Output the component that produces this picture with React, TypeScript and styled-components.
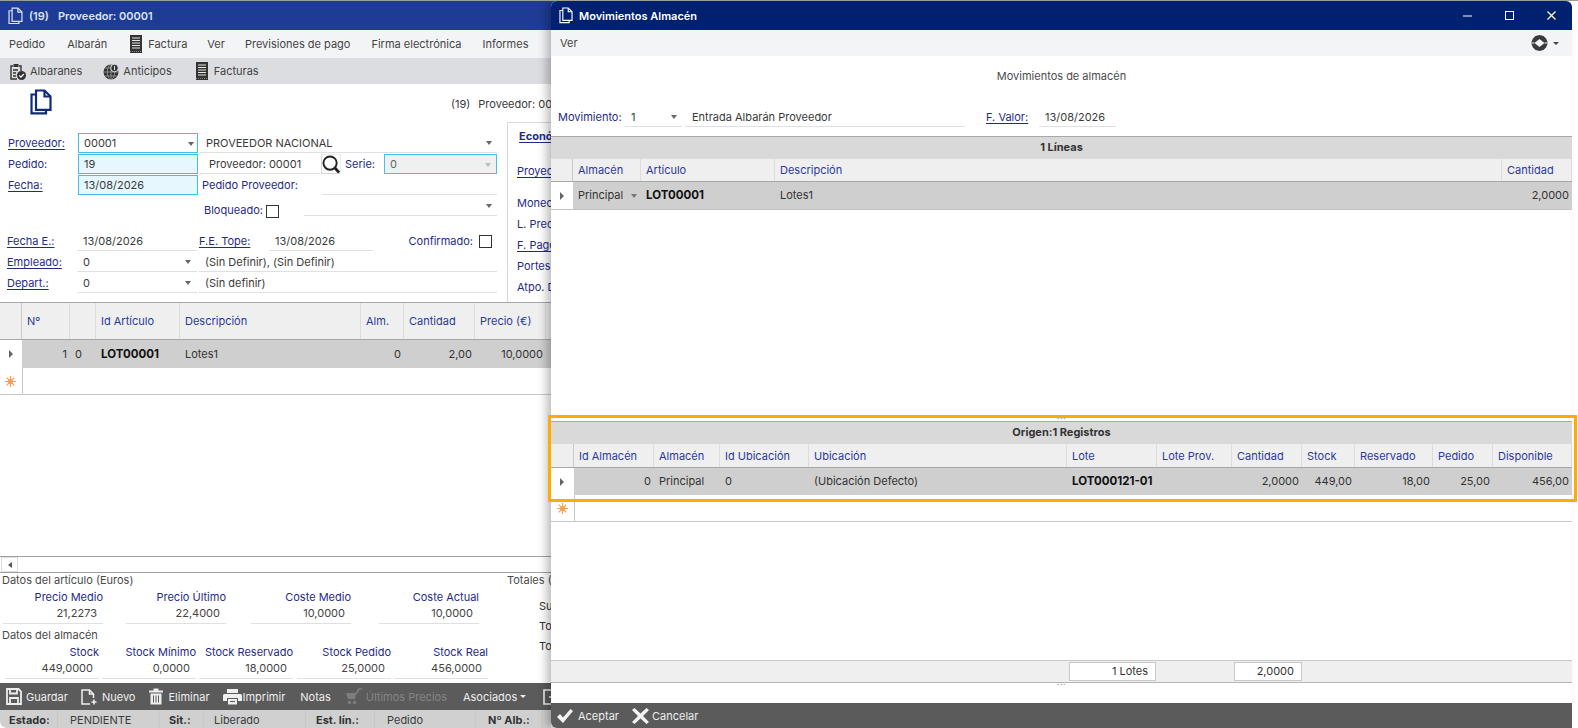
import React from "react";
import styled, { createGlobalStyle } from "styled-components";

const GlobalStyle = createGlobalStyle`
  html, body { margin: 0; padding: 0; background: #fff; }
  body {
    font-family: Inter, "Liberation Sans", sans-serif;
    font-size: 11px;
    color: #3a3a3a;
  }
  * { box-sizing: border-box; }
`;

const NAVY = "#1f2c86";
const HEAD = "#2b3a9c";
const LINE = "#dfe0e6";
const CYAN = "#43bff0";

const Desktop = styled.div`
  position: relative;
  width: 1578px;
  height: 728px;
  overflow: hidden;
  background: #fff;
  border-top: 1px solid #9c9c9c;
`;

const BackWindow = styled.div`
  position: absolute;
  left: 0;
  top: 0;
  width: 640px;
  height: 727px;
  display: flex;
  flex-direction: column;
  background: #fff;
  overflow: hidden;
  border-bottom-left-radius: 7px;
`;

const TitleBar = styled.div<{ $bg: string }>`
  height: 29px;
  flex: none;
  display: flex;
  align-items: center;
  background: ${(p) => p.$bg};
  color: #fff;
  padding-left: 8px;
`;

const TitleText = styled.span<{ $ml: number; $dim?: boolean }>`
  margin-left: ${(p) => p.$ml}px;
  font-weight: 600;
  color: ${(p) => (p.$dim ? "#dbe1f2" : "#fff")};
  white-space: nowrap;
`;

const WinControls = styled.div`
  margin-left: auto;
  display: flex;
  align-items: center;
`;

const WinButton = styled.div`
  width: 42px;
  height: 29px;
  display: flex;
  align-items: center;
  justify-content: center;
`;

const MenuBar = styled.div<{ $h: number }>`
  height: ${(p) => p.$h}px;
  flex: none;
  display: flex;
  align-items: center;
  background: #f3f4f6;
  padding-left: 9px;
  color: #444;
  white-space: nowrap;
`;

const MenuItem = styled.span<{ $ml?: number }>`
  display: inline-flex;
  align-items: center;
  gap: 6px;
  margin-left: ${(p) => p.$ml ?? 0}px;
`;

const MenuRight = styled.div`
  margin-left: auto;
  padding-right: 13px;
  display: flex;
  align-items: center;
  gap: 5px;
`;

const ToolStrip = styled.div`
  height: 26px;
  flex: none;
  display: flex;
  align-items: center;
  background: #dcdde1;
  padding-left: 10px;
  color: #444;
`;

const ToolItem = styled.span<{ $ml?: number; $gap: number }>`
  display: inline-flex;
  align-items: center;
  gap: ${(p) => p.$gap}px;
  margin-left: ${(p) => p.$ml ?? 0}px;
`;

const DocHeader = styled.div`
  height: 38px;
  flex: none;
  display: flex;
  padding: 5px 0 0 30px;
`;

const DocCaption = styled.div`
  margin-left: 399px;
  padding-top: 8px;
  display: flex;
  gap: 8px;
  white-space: nowrap;
`;

const FormArea = styled.div`
  height: 180px;
  flex: none;
  display: flex;
`;

const FormColumn = styled.div`
  width: 507px;
  flex: none;
  padding-top: 11px;
`;

const SidePanel = styled.div`
  flex: 1;
  border-top: 1px solid #d8d8d8;
  border-left: 1px solid #d8d8d8;
  padding-top: 6px;
`;

const SideTab = styled.div`
  margin-left: 11px;
  font-weight: 700;
  color: ${NAVY};
  text-decoration: underline;
  text-underline-offset: 2px;
  height: 18px;
`;

const SideRow = styled.div<{ $mt?: number; $link?: boolean }>`
  margin: ${(p) => p.$mt ?? 0}px 0 0 9px;
  height: 21px;
  line-height: 21px;
  color: ${NAVY};
  white-space: nowrap;
  text-decoration: ${(p) => (p.$link ? "underline" : "none")};
  text-underline-offset: 2px;
`;

const FormRow = styled.div<{ $h?: number; $mt?: number }>`
  display: flex;
  height: ${(p) => p.$h ?? 21}px;
  margin-top: ${(p) => p.$mt ?? 0}px;
  align-items: flex-start;
`;

const Label = styled.div<{ $w: number; $pl?: number; $pt?: number; $right?: boolean }>`
  width: ${(p) => p.$w}px;
  flex: none;
  padding-left: ${(p) => p.$pl ?? 0}px;
  padding-top: ${(p) => p.$pt ?? 0}px;
  height: 20px;
  line-height: 21px;
  color: ${NAVY};
  white-space: nowrap;
  text-align: ${(p) => (p.$right ? "right" : "left")};
`;

const LinkText = styled.span`
  text-decoration: underline;
  text-underline-offset: 2px;
`;

const BoxField = styled.div<{ $w: number; $bg?: string; $mut?: boolean }>`
  position: relative;
  width: ${(p) => p.$w}px;
  flex: none;
  height: 20px;
  line-height: 19px;
  padding-left: 5px;
  border: 1px solid ${CYAN};
  background: ${(p) => p.$bg ?? "#fff"};
  color: ${(p) => (p.$mut ? "#666" : "#3a3a3a")};
`;

const LineField = styled.div<{ $w: number; $ml?: number; $pl?: number }>`
  position: relative;
  width: ${(p) => p.$w}px;
  flex: none;
  margin-left: ${(p) => p.$ml ?? 0}px;
  height: 20px;
  line-height: 21px;
  padding-left: ${(p) => p.$pl ?? 6}px;
  border-bottom: 1px solid ${LINE};
  white-space: nowrap;
`;

const Caret = styled.i<{ $r?: number; $c?: string }>`
  position: absolute;
  right: ${(p) => p.$r ?? 5}px;
  top: 8px;
  width: 0;
  height: 0;
  border-left: 3.5px solid transparent;
  border-right: 3.5px solid transparent;
  border-top: 4px solid ${(p) => p.$c ?? "#666"};
`;

const RowCaret = styled(Caret)`
  top: 12px;
`;

const InlineCaret = styled.i<{ $c: string }>`
  display: inline-block;
  width: 0;
  height: 0;
  border-left: 3px solid transparent;
  border-right: 3px solid transparent;
  border-top: 3px solid ${(p) => p.$c};
`;

const Check = styled.div<{ $ml: number; $mt: number }>`
  width: 13px;
  height: 13px;
  flex: none;
  margin: ${(p) => p.$mt}px 0 0 ${(p) => p.$ml}px;
  border: 1px solid #333;
  background: #fff;
`;

const SearchButton = styled.div`
  width: 20px;
  height: 20px;
  flex: none;
  margin-left: 1px;
  border: 1px solid #d8d8d8;
  border-right-color: #eee;
  border-top-color: #eee;
  display: flex;
  align-items: center;
  justify-content: center;
`;

const TableRow = styled.div<{ $cols: string; $h: number; $bb?: string }>`
  display: grid;
  grid-template-columns: ${(p) => p.$cols};
  height: ${(p) => p.$h}px;
  border-bottom: ${(p) => (p.$bb ? `1px solid ${p.$bb}` : "none")};
  flex: none;
`;

const HeadCell = styled.div`
  background: #efefef;
  color: ${HEAD};
  padding-left: 5px;
  display: flex;
  align-items: center;
  border-right: 1px solid #dcdcdc;
  white-space: nowrap;
  overflow: hidden;
`;

const SelectorHead = styled(HeadCell)`
  border-right: 1px solid #c8c8c8;
`;

const DataCell = styled.div<{ $right?: boolean; $bold?: boolean }>`
  position: relative;
  background: #cfcfcf;
  color: ${(p) => (p.$bold ? "#111" : "#333")};
  font-size: ${(p) => (p.$bold ? 11.5 : 11)}px;
  font-weight: ${(p) => (p.$bold ? 700 : 400)};
  display: flex;
  align-items: center;
  justify-content: ${(p) => (p.$right ? "flex-end" : "flex-start")};
  padding: 0 3px 1px 5px;
  white-space: nowrap;
  overflow: hidden;
`;

const SelectorCell = styled.div`
  display: flex;
  align-items: center;
  justify-content: center;
  background: #fff;
  padding-right: 1px;
`;

const RowArrow = styled.i`
  width: 0;
  height: 0;
  border-top: 4px solid transparent;
  border-bottom: 4px solid transparent;
  border-left: 4px solid #666;
`;

const NewRowFill = styled.div`
  background: #fff;
  border-left: 1px solid #c8c8c8;
`;

const BackGrid = styled.div`
  border-top: 1px solid #a8a8a8;
  flex: none;
  height: 254px;
`;

const HScroll = styled.div`
  height: 17px;
  flex: none;
  display: flex;
  border-top: 1px solid #a0a0a0;
  border-bottom: 1px solid #a0a0a0;
`;

const ScrollArrow = styled.div`
  width: 17px;
  margin-left: 1px;
  border: 1px solid #ddd;
  display: flex;
  align-items: center;
  justify-content: center;
  &::before {
    content: "";
    border-top: 3px solid transparent;
    border-bottom: 3px solid transparent;
    border-right: 4px solid #555;
  }
`;

const DataSection = styled.div`
  flex: 1;
  display: flex;
`;

const DataLeft = styled.div`
  width: 505px;
  flex: none;
`;

const DataRight = styled.div`
  flex: 1;
  color: #444;
`;

const Caption = styled.div<{ $h: number; $pt?: number }>`
  height: ${(p) => p.$h}px;
  padding: ${(p) => p.$pt ?? 0}px 0 0 2px;
  line-height: 15px;
  color: #4a4a4a;
  white-space: nowrap;
`;

const TotalsLine = styled.div<{ $mt: number }>`
  margin: ${(p) => p.$mt}px 0 0 34px;
  height: 14px;
  line-height: 14px;
  white-space: nowrap;
  color: #333;
`;

const StatRow = styled.div<{ $pl: number }>`
  display: flex;
  padding-left: ${(p) => p.$pl}px;
`;

const Stat = styled.div<{ $w: number; $ml: number }>`
  width: ${(p) => p.$w}px;
  margin-left: ${(p) => p.$ml}px;
  flex: none;
  text-align: right;
`;

const StatLabel = styled.div`
  height: 16px;
  line-height: 16px;
  color: ${NAVY};
  white-space: nowrap;
`;

const StatValue = styled.div`
  height: 19px;
  line-height: 17px;
  padding-right: 6px;
  border-bottom: 1px solid ${LINE};
  color: #444;
`;

const ActionBar = styled.div<{ $h: number }>`
  height: ${(p) => p.$h}px;
  flex: none;
  display: flex;
  align-items: center;
  background: #5b5b5b;
  color: #eee;
  padding-left: 6px;
  white-space: nowrap;
`;

const ActionItem = styled.span<{ $ml?: number; $gap?: number; $off?: boolean }>`
  display: inline-flex;
  align-items: center;
  gap: ${(p) => p.$gap ?? 4}px;
  margin-left: ${(p) => p.$ml ?? 0}px;
  color: ${(p) => (p.$off ? "#858585" : "#eee")};
`;

const StatusBar = styled.div`
  height: 18px;
  flex: none;
  display: flex;
  background: #d0d0d0;
`;

const StatusCell = styled.div<{ $w: number; $pl: number; $bold?: boolean }>`
  width: ${(p) => p.$w}px;
  flex: none;
  padding-left: ${(p) => p.$pl}px;
  line-height: 20px;
  font-weight: ${(p) => (p.$bold ? 700 : 400)};
  color: ${(p) => (p.$bold ? "#333" : "#3c3c3c")};
  border-right: 1px solid #c8c8c8;
  white-space: nowrap;
`;

const Modal = styled.div`
  position: absolute;
  left: 551px;
  top: 0;
  width: 1021px;
  height: 727px;
  display: flex;
  flex-direction: column;
  background: #fff;
  border-radius: 6px 6px 0 6px;
  overflow: hidden;
`;

const ModalShadow = styled.div`
  position: absolute;
  left: 551px;
  top: 0;
  width: 1021px;
  height: 727px;
  box-shadow: -5px 0 9px -1px rgba(0, 0, 0, 0.28);
`;

const ModalHeading = styled.div`
  height: 38px;
  flex: none;
  padding-top: 12px;
  text-align: center;
  line-height: 16px;
  color: #4c4c4c;
`;

const ModalForm = styled.div`
  display: flex;
  flex: none;
  height: 20px;
  margin: 13px 0 9px;
`;

const Pane = styled.div<{ $h: number }>`
  height: ${(p) => p.$h}px;
  flex: none;
  border-top: 1px solid #a8a8a8;
`;

const GroupBand = styled.div`
  height: 22px;
  background: #d9d9d9;
  text-align: center;
  line-height: 21px;
  font-weight: 700;
  color: #333;
`;

const Splitter = styled.div<{ $h: number }>`
  height: ${(p) => p.$h}px;
  flex: none;
  display: flex;
  justify-content: center;
  color: #888;
  font-size: 9px;
  line-height: 3px;
  letter-spacing: 0.5px;
`;

const TotalsBar = styled.div`
  height: 23px;
  flex: none;
  display: flex;
  align-items: center;
  padding-left: 518px;
  background: #efefef;
  border-top: 1px solid #c8c8c8;
  border-bottom: 1px solid #b4b4b4;
`;

const TotalBox = styled.div<{ $w: number; $ml?: number }>`
  width: ${(p) => p.$w}px;
  margin-left: ${(p) => p.$ml ?? 0}px;
  height: 19px;
  line-height: 17px;
  text-align: right;
  padding-right: 7px;
  background: #fff;
  border: 1px solid #c8c8c8;
  color: #333;
`;

const Highlight = styled.div`
  position: absolute;
  left: 548px;
  top: 414px;
  width: 1029px;
  height: 87px;
  border: 3px solid #ffab00;
  pointer-events: none;
`;

const DocsIcon = ({ size, color }: { size: number; color: string }) => (
  <svg width={size} height={size * 1.18} viewBox="0 0 22 26" fill="none" stroke={color} strokeWidth={size > 18 ? 2.2 : 1.8}>
    <path d="M6 1.5H14.5L20.5 7.5V21H6Z" />
    <path d="M14.5 1.5V7.5H20.5" />
    <path d="M6 5.5H1.5V24.5H16V21" />
  </svg>
);

const LedgerIcon = () => (
  <svg width="12" height="18" viewBox="0 0 12 18">
    <rect width="12" height="18" fill="#333" />
    <path d="M2 3H10M2 5.5H10M2 8H10M2 10.5H10M2 13H10" stroke="#e8e8e8" strokeWidth="1" />
    <path d="M0 16.5H12" stroke="#888" strokeDasharray="1 1" />
  </svg>
);

const ClipboardIcon = () => (
  <svg width="16" height="17" viewBox="0 0 16 17" fill="none">
    <path d="M3 3H1V16H7M9 3H11V8" stroke="#333" strokeWidth="1.4" />
    <rect x="3.5" y="1" width="5" height="3" fill="#333" />
    <path d="M3 7H8M3 10H6M3 13H6" stroke="#333" strokeWidth="1.3" />
    <circle cx="11.5" cy="12.5" r="4.5" fill="#333" />
    <path d="M9.3 12.5L11 14.2L13.8 11" stroke="#fff" strokeWidth="1.2" />
  </svg>
);

const GlobeIcon = () => (
  <svg width="16" height="17" viewBox="0 0 16 17" fill="none">
    <circle cx="8" cy="9" r="7.5" fill="#333" />
    <path d="M.5 9H15.5M2 5H14M2 13H14M8 1.5V16.5" stroke="#aaa" strokeWidth=".7" />
    <ellipse cx="8" cy="9" rx="3.6" ry="7.5" stroke="#aaa" strokeWidth=".7" />
    <circle cx="11.5" cy="5" r="3.8" fill="#333" stroke="#dcdde1" />
    <path d="M11.5 3V7" stroke="#dcdde1" />
  </svg>
);

const MagnifierIcon = () => (
  <svg width="19" height="19" viewBox="0 0 19 19" fill="none" stroke="#222">
    <circle cx="8.5" cy="8" r="7" strokeWidth="2" />
    <path d="M13.5 13L18 18" strokeWidth="3" />
  </svg>
);

const SaveIcon = () => (
  <svg width="16" height="17" viewBox="0 0 16 17" fill="none" stroke="#eee" strokeWidth="1.8">
    <path d="M1 1H12.5L15 3.5V16H1Z" />
    <path d="M4 1V5.5H11V1M4 16V10H12V16" />
  </svg>
);

const NewDocIcon = () => (
  <svg width="17" height="16" viewBox="0 0 17 16" fill="none" stroke="#eee" strokeWidth="1.5">
    <path d="M9 15H1V1H8.5L12.5 5V9" />
    <path d="M8.5 1V5H12.5" />
    <path d="M13 10.5V15.5M10.5 13H15.5" strokeWidth="1.6" />
  </svg>
);

const TrashIcon = () => (
  <svg width="14" height="17" viewBox="0 0 14 17">
    <path d="M0 2.5H14V4.5H0ZM4.5 .5H9.5V2.5H4.5Z" fill="#eee" />
    <path d="M1.5 5.5H12.5V16.5H1.5Z" fill="#eee" />
    <path d="M4.5 7.5V14.5M7 7.5V14.5M9.5 7.5V14.5" stroke="#5b5b5b" />
  </svg>
);

const PrinterIcon = () => (
  <svg width="19" height="16" viewBox="0 0 19 16">
    <path d="M4 0H15V4H4Z" fill="#eee" />
    <path d="M1.5 5H17.5Q19 5 19 6.5V12H15V9H4V12H0V6.5Q0 5 1.5 5Z" fill="#eee" />
    <path d="M5 10H14V15.5H5Z" fill="#eee" />
    <path d="M7 12.5H12" stroke="#5b5b5b" />
  </svg>
);

const CartIcon = () => (
  <svg width="16" height="17" viewBox="0 0 16 17">
    <path d="M0 5H10L9 11H2Z" fill="#7d7d7d" />
    <path d="M10 6L13 1H16" stroke="#7d7d7d" strokeWidth="1.6" fill="none" />
    <circle cx="3.5" cy="14.5" r="1.7" fill="#7d7d7d" />
    <circle cx="8.5" cy="14.5" r="1.7" fill="#7d7d7d" />
  </svg>
);

const FrameIcon = () => (
  <svg width="14" height="16" viewBox="0 0 14 16" fill="none" stroke="#eee" strokeWidth="1.6">
    <path d="M1 1H13V15H1Z" />
    <path d="M6 8H9" />
  </svg>
);

const SyncIcon = () => (
  <svg width="17" height="16" viewBox="0 0 17 16">
    <path d="M4.5 1L8.5 0L12.5 1L15 3.5L17 8L15 12.5L12.5 15L8.5 16L4.5 15L2 12.5L0 8L2 3.5Z" fill="#3a3a3a" />
    <path d="M8.5 4L13.5 8L8.5 12L3.5 8Z" fill="#f3f4f6" />
    <path d="M0 8H3.5M13.5 8H17" stroke="#f3f4f6" strokeWidth="1" />
  </svg>
);

const StarIcon = () => (
  <svg width="11" height="11" viewBox="0 0 11 11" stroke="#f7a14a" strokeWidth="1.2">
    <path d="M5.5 0V11M0 5.5H11M1.7 1.7L9.3 9.3M9.3 1.7L1.7 9.3" />
    <circle cx="5.5" cy="5.5" r="2.5" fill="#f7a14a" stroke="none" />
  </svg>
);

const CheckMarkIcon = () => (
  <svg width="16" height="14" viewBox="0 0 16 14">
    <path d="M0 8L3 5L6 8.5L13.5 0L16 2L6 14Z" fill="#f2f2f2" />
  </svg>
);

const CrossIcon = () => (
  <svg width="17" height="16" viewBox="0 0 17 16">
    <path d="M0 2L2.5 0L8.5 5.5L14.5 0L17 2L11 8L17 14L14.5 16L8.5 10.5L2.5 16L0 14L6 8Z" fill="#f2f2f2" />
  </svg>
);

const backCols = "22px 48px 26px 84px 181px 43px 71px 71px 1fr";
const modalTopCols = "22px 68px 134px 727px 70px";
const modalBottomCols = "23px 80px 66px 89px 258px 90px 75px 70px 53px 78px 60px 79px";

const bottomHeads = [
  "Id Almacén",
  "Almacén",
  "Id Ubicación",
  "Ubicación",
  "Lote",
  "Lote Prov.",
  "Cantidad",
  "Stock",
  "Reservado",
  "Pedido",
  "Disponible",
];

const articleStats = [
  { label: "Precio Medio", value: "21,2273", ml: 0 },
  { label: "Precio Último", value: "22,4000", ml: 23 },
  { label: "Coste Medio", value: "10,0000", ml: 25 },
  { label: "Coste Actual", value: "10,0000", ml: 28 },
];

const storeStats = [
  { label: "Stock", value: "449,0000", ml: 0 },
  { label: "Stock Mínimo", value: "0,0000", ml: 3 },
  { label: "Stock Reservado", value: "18,0000", ml: 3 },
  { label: "Stock Pedido", value: "25,0000", ml: 4 },
  { label: "Stock Real", value: "456,0000", ml: 3 },
];

function BackOrderWindow() {
  return (
    <BackWindow>
      <TitleBar $bg="#1e3c96">
        <DocsIcon size={15} color="#dbe1f2" />
        <TitleText $ml={6} $dim>(19)</TitleText>
        <TitleText $ml={9} $dim>Proveedor: 00001</TitleText>
      </TitleBar>
      <MenuBar $h={28}>
        <MenuItem>Pedido</MenuItem>
        <MenuItem $ml={22}>Albarán</MenuItem>
        <MenuItem $ml={23}><LedgerIcon />Factura</MenuItem>
        <MenuItem $ml={20}>Ver</MenuItem>
        <MenuItem $ml={20}>Previsiones de pago</MenuItem>
        <MenuItem $ml={21}>Firma electrónica</MenuItem>
        <MenuItem $ml={21}>Informes</MenuItem>
        <MenuItem $ml={22}>L</MenuItem>
      </MenuBar>
      <ToolStrip>
        <ToolItem $gap={4}><ClipboardIcon />Albaranes</ToolItem>
        <ToolItem $ml={21} $gap={4}><GlobeIcon />Anticipos</ToolItem>
        <ToolItem $ml={24} $gap={6}><LedgerIcon />Facturas</ToolItem>
      </ToolStrip>
      <DocHeader>
        <DocsIcon size={22} color="#0f2a78" />
        <DocCaption>
          <span>(19)</span>
          <span>Proveedor: 00001</span>
        </DocCaption>
      </DocHeader>
      <FormArea>
        <FormColumn>
          <FormRow>
            <Label $w={78} $pl={8}><LinkText>Proveedor:</LinkText></Label>
            <BoxField $w={120}>00001<Caret $r={3} /></BoxField>
            <LineField $w={297} $ml={2}>PROVEEDOR NACIONAL<Caret /></LineField>
          </FormRow>
          <FormRow>
            <Label $w={78} $pl={8}>Pedido:</Label>
            <BoxField $w={120} $bg="#e6f7fe">19</BoxField>
            <LineField $w={120} $ml={2} $pl={9}>Proveedor: 00001</LineField>
            <SearchButton><MagnifierIcon /></SearchButton>
            <Label $w={43} $pl={4}>Serie:</Label>
            <BoxField $w={113} $bg="#f0f0f0" $mut>0<Caret $r={5} $c="#bbb" /></BoxField>
          </FormRow>
          <FormRow>
            <Label $w={78} $pl={8}><LinkText>Fecha:</LinkText></Label>
            <BoxField $w={120} $bg="#e6f7fe">13/08/2026</BoxField>
            <Label $w={124} $pl={4}>Pedido Proveedor:</Label>
            <LineField $w={175} />
          </FormRow>
          <FormRow $h={25}>
            <Label $w={266} $pl={204} $pt={4}>Bloqueado:</Label>
            <Check $ml={0} $mt={9} />
            <LineField $w={193} $ml={25} $pl={0}>&nbsp;<Caret /></LineField>
          </FormRow>
          <FormRow $mt={10}>
            <Label $w={77} $pl={7}><LinkText>Fecha E.:</LinkText></Label>
            <LineField $w={120}>13/08/2026</LineField>
            <Label $w={72} $pl={2}><LinkText>F.E. Tope:</LinkText></Label>
            <LineField $w={104}>13/08/2026</LineField>
            <Label $w={100} $right>Confirmado:</Label>
            <Check $ml={6} $mt={4} />
          </FormRow>
          <FormRow>
            <Label $w={77} $pl={7}><LinkText>Empleado:</LinkText></Label>
            <LineField $w={120}>0<Caret $r={6} /></LineField>
            <LineField $w={298} $ml={2}>(Sin Definir), (Sin Definir)</LineField>
          </FormRow>
          <FormRow>
            <Label $w={77} $pl={7}><LinkText>Depart.:</LinkText></Label>
            <LineField $w={120}>0<Caret $r={6} /></LineField>
            <LineField $w={298} $ml={2}>(Sin definir)</LineField>
          </FormRow>
        </FormColumn>
        <SidePanel>
          <SideTab>Económicos</SideTab>
          <SideRow $mt={14} $link>Proyecto</SideRow>
          <SideRow $mt={11}>Moneda</SideRow>
          <SideRow>L. Precios</SideRow>
          <SideRow $link>F. Pago</SideRow>
          <SideRow>Portes</SideRow>
          <SideRow>Atpo. Dto.</SideRow>
        </SidePanel>
      </FormArea>
      <BackGrid>
        <TableRow $cols={backCols} $h={37} $bb="#a8a8a8">
          <SelectorHead />
          <HeadCell>Nº</HeadCell>
          <HeadCell />
          <HeadCell>Id Artículo</HeadCell>
          <HeadCell>Descripción</HeadCell>
          <HeadCell>Alm.</HeadCell>
          <HeadCell>Cantidad</HeadCell>
          <HeadCell>Precio (€)</HeadCell>
          <HeadCell />
        </TableRow>
        <TableRow $cols={backCols} $h={28}>
          <SelectorCell><RowArrow /></SelectorCell>
          <DataCell $right>1</DataCell>
          <DataCell>0</DataCell>
          <DataCell $bold>LOT00001</DataCell>
          <DataCell>Lotes1</DataCell>
          <DataCell $right>0</DataCell>
          <DataCell $right>2,00</DataCell>
          <DataCell $right>10,0000</DataCell>
          <DataCell />
        </TableRow>
        <TableRow $cols="22px 1fr" $h={27} $bb="#c8c8c8">
          <SelectorCell><StarIcon /></SelectorCell>
          <NewRowFill />
        </TableRow>
      </BackGrid>
      <HScroll><ScrollArrow /></HScroll>
      <DataSection>
        <DataLeft>
          <Caption $h={16}>Datos del artículo (Euros)</Caption>
          <StatRow $pl={3}>
            {articleStats.map((s) => (
              <Stat key={s.label} $w={100} $ml={s.ml}>
                <StatLabel>{s.label}</StatLabel>
                <StatValue>{s.value}</StatValue>
              </Stat>
            ))}
          </StatRow>
          <Caption $h={20} $pt={4}>Datos del almacén</Caption>
          <StatRow $pl={5}>
            {storeStats.map((s) => (
              <Stat key={s.label} $w={94} $ml={s.ml}>
                <StatLabel>{s.label}</StatLabel>
                <StatValue>{s.value}</StatValue>
              </Stat>
            ))}
          </StatRow>
        </DataLeft>
        <DataRight>
          <Caption $h={16}>Totales (Euros)</Caption>
          <TotalsLine $mt={10}>Subtotal</TotalsLine>
          <TotalsLine $mt={6}>Total</TotalsLine>
          <TotalsLine $mt={6}>Total</TotalsLine>
        </DataRight>
      </DataSection>
      <ActionBar $h={27}>
        <ActionItem><SaveIcon />Guardar</ActionItem>
        <ActionItem $ml={13} $gap={4}><NewDocIcon />Nuevo</ActionItem>
        <ActionItem $ml={14} $gap={5}><TrashIcon />Eliminar</ActionItem>
        <ActionItem $ml={13} $gap={1}><PrinterIcon />Imprimir</ActionItem>
        <ActionItem $ml={15}>Notas</ActionItem>
        <ActionItem $ml={15} $gap={4} $off><CartIcon />Últimos Precios</ActionItem>
        <ActionItem $ml={16} $gap={3}>Asociados<InlineCaret $c="#eee" /></ActionItem>
        <ActionItem $ml={17}><FrameIcon /></ActionItem>
      </ActionBar>
      <StatusBar>
        <StatusCell $w={58} $pl={9} $bold>Estado:</StatusCell>
        <StatusCell $w={102} $pl={12}>PENDIENTE</StatusCell>
        <StatusCell $w={44} $pl={9} $bold>Sit.:</StatusCell>
        <StatusCell $w={102} $pl={10}>Liberado</StatusCell>
        <StatusCell $w={69} $pl={10} $bold>Est. lín.:</StatusCell>
        <StatusCell $w={101} $pl={12}>Pedido</StatusCell>
        <StatusCell $w={67} $pl={12} $bold>Nº Alb.:</StatusCell>
      </StatusBar>
    </BackWindow>
  );
}

function MovementsModal() {
  return (
    <Modal>
      <TitleBar $bg="#002070">
        <DocsIcon size={14} color="#fff" />
        <TitleText $ml={6}>Movimientos Almacén</TitleText>
        <WinControls>
          <WinButton>
            <svg width="9" height="2" viewBox="0 0 9 2"><path d="M0 1H9" stroke="#fff" /></svg>
          </WinButton>
          <WinButton>
            <svg width="9" height="9" viewBox="0 0 9 9" fill="none"><rect x=".5" y=".5" width="8" height="8" stroke="#fff" /></svg>
          </WinButton>
          <WinButton>
            <svg width="9" height="9" viewBox="0 0 9 9"><path d="M.5 .5L8.5 8.5M8.5 .5L.5 8.5" stroke="#fff" strokeWidth="1.2" /></svg>
          </WinButton>
        </WinControls>
      </TitleBar>
      <MenuBar $h={26}>
        <MenuItem>Ver</MenuItem>
        <MenuRight>
          <SyncIcon />
          <InlineCaret $c="#444" />
        </MenuRight>
      </MenuBar>
      <ModalHeading>Movimientos de almacén</ModalHeading>
      <ModalForm>
        <Label $w={74} $pl={7}>Movimiento:</Label>
        <LineField $w={57}>1<Caret $r={5} /></LineField>
        <LineField $w={280} $ml={3} $pl={7}>Entrada Albarán Proveedor</LineField>
        <Label $w={74} $pl={21}><LinkText>F. Valor:</LinkText></Label>
        <LineField $w={77}>13/08/2026</LineField>
      </ModalForm>
      <Pane $h={281}>
        <GroupBand>1 Líneas</GroupBand>
        <TableRow $cols={modalTopCols} $h={23} $bb="#a8a8a8">
          <SelectorHead />
          <HeadCell>Almacén</HeadCell>
          <HeadCell>Artículo</HeadCell>
          <HeadCell>Descripción</HeadCell>
          <HeadCell>Cantidad</HeadCell>
        </TableRow>
        <TableRow $cols={modalTopCols} $h={28} $bb="#c4c4c4">
          <SelectorCell><RowArrow /></SelectorCell>
          <DataCell>Principal<RowCaret $r={4} $c="#777" /></DataCell>
          <DataCell $bold>LOT00001</DataCell>
          <DataCell>Lotes1</DataCell>
          <DataCell $right>2,0000</DataCell>
        </TableRow>
      </Pane>
      <Splitter $h={4}>···</Splitter>
      <Pane $h={239}>
        <GroupBand>Origen:1 Registros</GroupBand>
        <TableRow $cols={modalBottomCols} $h={24} $bb="#a8a8a8">
          <SelectorHead />
          {bottomHeads.map((h) => (
            <HeadCell key={h}>{h}</HeadCell>
          ))}
        </TableRow>
        <TableRow $cols={modalBottomCols} $h={27}>
          <SelectorCell><RowArrow /></SelectorCell>
          <DataCell $right>0</DataCell>
          <DataCell>Principal</DataCell>
          <DataCell>0</DataCell>
          <DataCell>(Ubicación Defecto)</DataCell>
          <DataCell $bold>LOT000121-01</DataCell>
          <DataCell />
          <DataCell $right>2,0000</DataCell>
          <DataCell $right>449,00</DataCell>
          <DataCell $right>18,00</DataCell>
          <DataCell $right>25,00</DataCell>
          <DataCell $right>456,00</DataCell>
        </TableRow>
        <TableRow $cols="23px 1fr" $h={27} $bb="#c8c8c8">
          <SelectorCell><StarIcon /></SelectorCell>
          <NewRowFill />
        </TableRow>
      </Pane>
      <TotalsBar>
        <TotalBox $w={87}>1 Lotes</TotalBox>
        <TotalBox $w={68} $ml={78}>2,0000</TotalBox>
      </TotalsBar>
      <Splitter $h={20}>···</Splitter>
      <ActionBar $h={25}>
        <ActionItem $gap={5}><CheckMarkIcon />Aceptar</ActionItem>
        <ActionItem $ml={13} $gap={3}><CrossIcon />Cancelar</ActionItem>
      </ActionBar>
    </Modal>
  );
}

export default function App() {
  return (
    <>
      <GlobalStyle />
      <Desktop>
        <BackOrderWindow />
        <ModalShadow />
        <MovementsModal />
        <Highlight />
      </Desktop>
    </>
  );
}
